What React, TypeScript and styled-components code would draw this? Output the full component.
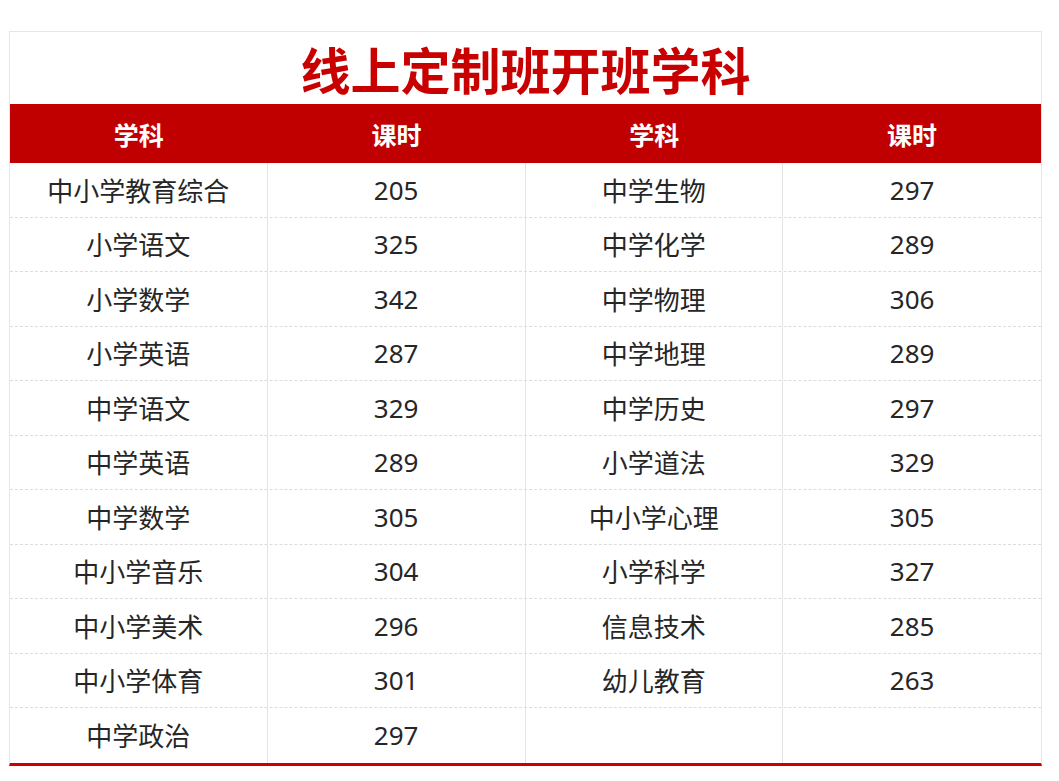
import React from 'react';
import styled, { createGlobalStyle } from 'styled-components';

const GlobalStyle = createGlobalStyle`
  html, body {
    margin: 0;
    padding: 0;
    background: #fff;
  }
  body {
    font-family: "Noto Sans", "Noto Sans CJK SC", sans-serif;
  }
`;

const Page = styled.div`
  padding: 31px 17px 0 9px;
`;

const Board = styled.div`
  width: 1031px;
  border: 1px solid #e6e6e6;
  border-bottom: 3px solid #cc0000;
  background: #fff;
`;

const Title = styled.h1`
  margin: 0;
  height: 72px;
  display: flex;
  align-items: center;
  justify-content: center;
  font-family: "Noto Sans CJK SC", sans-serif;
  font-size: 50px;
  font-weight: 700;
  color: #c80000;
`;

const HeadRow = styled.div`
  display: grid;
  grid-template-columns: repeat(4, 1fr);
  height: 59px;
  background: #c00000;
`;

const HeadCell = styled.div`
  display: flex;
  align-items: center;
  justify-content: center;
  color: #fff;
  font-family: "Noto Sans CJK SC", sans-serif;
  font-size: 25px;
  font-weight: 700;
`;

const Row = styled.div<{ $last?: boolean }>`
  display: grid;
  grid-template-columns: repeat(4, 1fr);
  height: 54.5px;
  box-sizing: border-box;
  border-bottom: ${(p) => (p.$last ? 'none' : '1px dashed #dcdcdc')};
`;

const Cell = styled.div<{ $end?: boolean }>`
  display: flex;
  align-items: center;
  justify-content: center;
  font-size: 26px;
  color: #262626;
  border-right: ${(p) => (p.$end ? 'none' : '1px solid #e4e4e4')};
`;

const rows: [string, string, string, string][] = [
  ['中小学教育综合', '205', '中学生物', '297'],
  ['小学语文', '325', '中学化学', '289'],
  ['小学数学', '342', '中学物理', '306'],
  ['小学英语', '287', '中学地理', '289'],
  ['中学语文', '329', '中学历史', '297'],
  ['中学英语', '289', '小学道法', '329'],
  ['中学数学', '305', '中小学心理', '305'],
  ['中小学音乐', '304', '小学科学', '327'],
  ['中小学美术', '296', '信息技术', '285'],
  ['中小学体育', '301', '幼儿教育', '263'],
  ['中学政治', '297', '', ''],
];

const App = () => {
  return (
    <Page>
      <GlobalStyle />
      <Board>
        <Title>线上定制班开班学科</Title>
        <HeadRow>
          <HeadCell>学科</HeadCell>
          <HeadCell>课时</HeadCell>
          <HeadCell>学科</HeadCell>
          <HeadCell>课时</HeadCell>
        </HeadRow>
        {rows.map((r, i) => (
          <Row key={i} $last={i === rows.length - 1}>
            {r.map((c, j) => (
              <Cell key={j} $end={j === 3}>
                {c}
              </Cell>
            ))}
          </Row>
        ))}
      </Board>
    </Page>
  );
};

export default App;
